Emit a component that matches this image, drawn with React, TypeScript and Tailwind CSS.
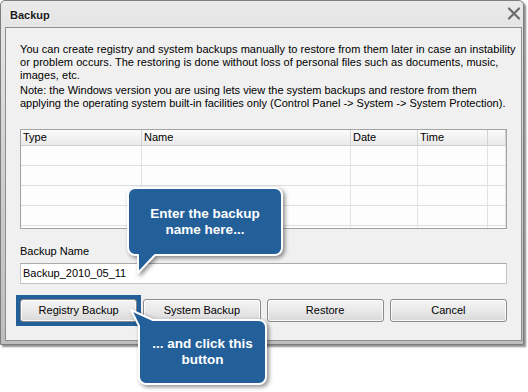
import React from "react";

const cols = [121, 209, 67, 70, 18];
const headers = ["Type", "Name", "Date", "Time", ""];

function Button({ label }: { label: string }) {
  return (
    <div className="h-[23px] rounded-[3px] border border-[#8a8a8a] bg-linear-to-b from-[#f4f4f4] via-[#e9e9e9] to-[#d9d9d9] flex items-center justify-center text-[11px] text-black shadow-[inset_0_0_0_1px_rgba(255,255,255,0.8)]">
      {label}
    </div>
  );
}

export default function App() {
  return (
    <div className="w-[528px] h-[392px] bg-white relative overflow-hidden font-['Liberation_Sans',Arial,sans-serif] text-black">
      {/* Window */}
      <div className="w-[524px] h-[345px] border border-[#7d7d7d] rounded-t-[5px] bg-linear-to-b from-[#e9e9e9] via-[#cfcfcf] to-[#bdbdbd] flex flex-col shadow-[2px_2px_2px_rgba(0,0,0,0.45)]">
        {/* Title bar */}
        <div className="h-[26px] flex items-center justify-between pl-[9px] pr-[2px] pt-[2px]">
          <span className="text-[11px] font-bold text-[#1a1a1a] [text-shadow:0_0_4px_rgba(255,255,255,0.9)]">Backup</span>
          <svg width="14" height="13" viewBox="0 0 14 13" className="mt-[-3px]">
            <path d="M2 1.5 L12 11.5 M12 1.5 L2 11.5" stroke="#6b6b6b" strokeWidth="2.2" strokeLinecap="round" />
          </svg>
        </div>
        {/* Client area */}
        <div className="flex-1 ml-[4px] mr-[1px] mb-[3px] border border-[#8e8e8e] bg-[#f0f0f0] px-[14px] pt-[15px] text-[11px] leading-[13px]">
          <p className="whitespace-nowrap tracking-[0.05px]">
            You can create registry and system backups manually to restore from them later in case an instability
            <br />
            or problem occurs. The restoring is done without loss of personal files such as documents, music,
            <br />
            images, etc.
          </p>
          <p className="whitespace-nowrap mt-[2px]">
            Note: the Windows version you are using lets view the system backups and restore from them
            <br />
            applying the operating system built-in facilities only (Control Panel -&gt; System -&gt; System Protection).
          </p>

          {/* Table */}
          <div className="mt-[19px] h-[100px] border border-[#a3a3a3] bg-white overflow-hidden">
            <div className="flex h-[16px] border-b border-[#d0d0d0] bg-linear-to-b from-[#fbfbfb] to-[#e9e9e9]">
              {headers.map((h, i) => (
                <div
                  key={i}
                  style={{ width: cols[i] }}
                  className="shrink-0 h-full border-r border-[#d2d2d2] pl-[2px] flex items-center text-[11px]"
                >
                  {h}
                </div>
              ))}
            </div>
            {[0, 1, 2, 3, 4].map((r) => (
              <div key={r} className="flex h-[20px] border-b border-[#dedede] bg-[#fdfdfd]">
                {cols.map((w, i) => (
                  <div key={i} style={{ width: w }} className="shrink-0 h-full border-r border-[#e3e3e3]" />
                ))}
              </div>
            ))}
          </div>

          <div className="mt-[16px]">Backup Name</div>
          <div className="mt-[5px] h-[21px] border border-[#c4c4c4] border-t-[#a9a9a9] bg-white flex items-center pl-[2px]">
            Backup_2010_05_11
          </div>

          <div className="mt-[15px] grid grid-cols-4 gap-[6px]">
            <div className="-m-[4px] p-[4px] bg-[#23609a]">
              <Button label="Registry Backup" />
            </div>
            <Button label="System Backup" />
            <Button label="Restore" />
            <Button label="Cancel" />
          </div>
        </div>
      </div>

      {/* Callout 1 */}
      <svg
        className="absolute left-[120px] top-[180px] drop-shadow-[2px_2px_2px_rgba(0,0,0,0.45)]"
        width="175"
        height="100"
        viewBox="0 0 175 100"
      >
        <path
          d="M15 8 H155 A7 7 0 0 1 162 15 V68 A7 7 0 0 1 155 75 H35 L18 93 V75 H15 A7 7 0 0 1 8 68 V15 A7 7 0 0 1 15 8 Z"
          fill="#23609a"
          stroke="#ffffff"
          strokeWidth="2"
          strokeLinejoin="round"
        />
      </svg>
      <div className="absolute left-[128px] top-[188px] w-[154px] h-[67px] flex items-center justify-center text-center text-white font-bold text-[13.5px] leading-[16px]">
        Enter the backup
        <br />
        name here...
      </div>

      {/* Callout 2 */}
      <svg
        className="absolute left-[120px] top-[300px] drop-shadow-[2px_2px_2px_rgba(0,0,0,0.45)]"
        width="160"
        height="92"
        viewBox="0 0 160 92"
      >
        <path
          d="M11 10 L33 20 H139 A7 7 0 0 1 146 27 V77 A7 7 0 0 1 139 84 H26 A7 7 0 0 1 19 77 V26 Z"
          fill="#23609a"
          stroke="#ffffff"
          strokeWidth="2"
          strokeLinejoin="round"
        />
      </svg>
      <div className="absolute left-[139px] top-[320px] w-[127px] h-[64px] flex items-center justify-center text-center text-white font-bold text-[13.5px] leading-[16px]">
        ... and click this
        <br />
        button
      </div>
    </div>
  );
}
